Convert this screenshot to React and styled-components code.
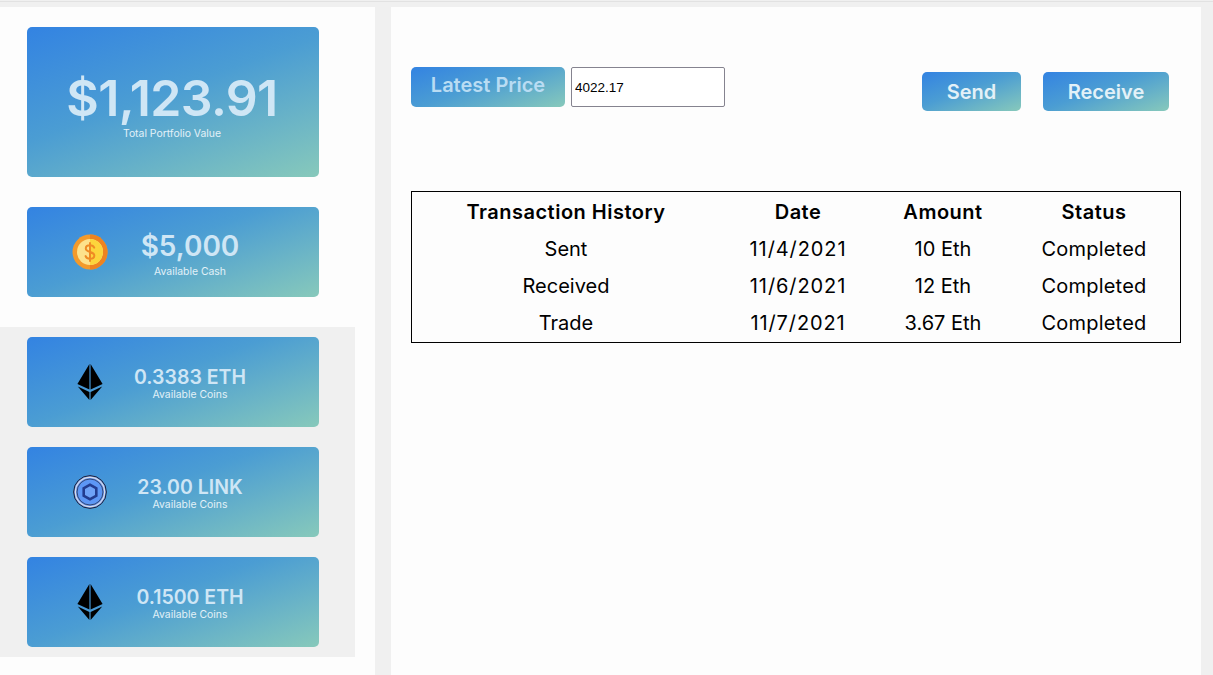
import React from "react";
import styled, { createGlobalStyle } from "styled-components";

const Global = createGlobalStyle`
  html, body { margin: 0; padding: 0; height: 100%; overflow: hidden; }
  body { background: #f0f0f0; font-family: "Inter", "Liberation Sans", sans-serif; }
  * { box-sizing: border-box; }
`;

const gradient = "linear-gradient(160deg, #3383e2 0%, #4b9dd3 45%, #87c9bb 100%)";

const Page = styled.div`
  height: 675px;
  display: grid;
  grid-template-columns: 375px 810px;
  column-gap: 16px;
  padding-top: 7px;
  background: linear-gradient(#f0f0f0 1px, #e2e2e2 1px, #e2e2e2 2px, #f0f0f0 2px);
`;
const Sidebar = styled.aside`
  background: #fdfdfd;
`;
const SideTop = styled.div`
  padding: 20px 0 30px 27px;
  display: flex;
  flex-direction: column;
  gap: 30px;
`;
const CoinSection = styled.section`
  width: 355px;
  height: 330px;
  background: #f0f0f0;
  padding: 10px 0 0 27px;
  display: flex;
  flex-direction: column;
  gap: 20px;
`;
const TotalCard = styled.div`
  width: 292px;
  height: 150px;
  border-radius: 5px;
  background: ${gradient};
  display: flex;
  flex-direction: column;
  align-items: center;
  justify-content: center;
  padding: 9px 2px 0 0;
`;
const TotalValue = styled.div`
  font-size: 50px;
  line-height: 50px;
  font-weight: 600;
  letter-spacing: -0.6px;
  color: #cfe6f5;
`;
const Caption = styled.div`
  margin-top: ${(p) => p.$gap || 0}px;
  font-size: 10.4px;
  line-height: 12px;
  font-weight: 400;
  color: #e2f1f8;
  white-space: nowrap;
`;
const AssetCard = styled.div`
  width: 292px;
  height: 90px;
  border-radius: 5px;
  background: ${gradient};
  display: grid;
  grid-template-columns: 45px 36px 164px;
  align-items: center;
`;
const IconSlot = styled.div`
  grid-column: 2;
  display: flex;
  justify-content: center;
  align-items: center;
  height: 36px;
`;
const AssetText = styled.div`
  grid-column: 3;
  display: flex;
  flex-direction: column;
  align-items: center;
  padding-top: ${(p) => p.$drop || 0}px;
`;
const AssetValue = styled.div`
  font-size: ${(p) => p.$size}px;
  line-height: ${(p) => p.$line}px;
  font-weight: 600;
  color: #cfe6f5;
  white-space: nowrap;
`;

const Main = styled.main`
  background: #fdfdfd;
  padding: 60px 32px 0 20px;
`;
const Toolbar = styled.div`
  display: flex;
  justify-content: space-between;
  align-items: flex-start;
  height: 124px;
`;
const PriceGroup = styled.div`
  display: flex;
  gap: 6px;
`;
const ActionGroup = styled.div`
  display: flex;
  gap: 22px;
  padding-top: 5px;
`;
const GradientButton = styled.button`
  width: ${(p) => p.$w}px;
  height: ${(p) => p.$h}px;
  padding: 0 0 ${(p) => p.$lift || 0}px;
  border: 0;
  border-radius: 5px;
  background: ${gradient};
  color: ${(p) => p.$color};
  font: 600 20px/1 "Inter", sans-serif;
`;
const PriceInput = styled.input`
  width: 154px;
  height: 40px;
  padding: 0 3px;
  border: 1px solid #85838f;
  border-radius: 2px;
  background: #fff;
  color: #000;
  font: 400 13.5px "Liberation Sans", sans-serif;
`;
const HistoryTable = styled.table`
  width: 770px;
  table-layout: fixed;
  border: 1px solid #000;
  border-spacing: 2px;
  color: #000;
  font-size: 20px;
`;
const HeadCell = styled.th`
  height: 35px;
  padding: 0;
  font-weight: 600;
  letter-spacing: 0.5px;
  text-align: center;
`;
const Cell = styled.td`
  height: 35px;
  padding: 0;
  font-weight: 400;
  letter-spacing: ${(p) => p.$spacing || 0}px;
  text-align: center;
`;

const Coin = () => (
  <svg width="36" height="36" viewBox="0 0 36 36">
    <circle cx="18" cy="18" r="17.5" fill="#f39a2b" />
    <path d="M18 .5a17.5 17.5 0 0 1 0 35z" fill="#ee8320" />
    <circle cx="18" cy="18" r="13" fill="#fde28c" />
    <path d="M18 5a13 13 0 0 1 0 26z" fill="#fcd43c" />
    <path d="M22.2 13.6c-.6-1.5-2.2-2.3-4.2-2.3-2.400 0-4.200 1.200-4.200 3.200 0 4.400 8.500 2.500 8.500 6.900 0 2-1.900 3.300-4.300 3.300-2.200 0-3.800-.9-4.400-2.600M18 9v18" fill="none" stroke="#ef8b24" strokeWidth="2" strokeLinecap="round" />
  </svg>
);
const Eth = () => (
  <svg width="26" height="36" viewBox="0 0 26 36">
    <path d="M12.400 0 .4 20l12 5.400zM13.600 0l12 20-12 5.400z" fill="#000" />
    <path d="M.8 22.600l11.600 5.400V36zM25.200 22.600l-11.600 5.400V36z" fill="#000" />
  </svg>
);
const LinkCoin = () => (
  <svg width="34" height="34" viewBox="0 0 34 34">
    <circle cx="17" cy="17" r="16.400" fill="#6f93e8" stroke="#1a2238" strokeWidth="1" />
    <circle cx="17" cy="17" r="14.600" fill="#6a96f2" stroke="#d9dde6" strokeWidth="1.200" />
    <circle cx="17" cy="17" r="13" fill="#5d97f5" stroke="#27324f" strokeWidth=".8" />
    <path d="M17 8.200 24.600 12.600v8.800L17 25.800 9.400 21.400v-8.800z" fill="#223c8f" />
    <path d="M17 11.200 22 14v6l-5 2.800-5-2.800v-6z" fill="#6ea2f7" />
  </svg>
);

const rows = [
  ["Sent", "11/4/2021", "10 Eth", "Completed"],
  ["Received", "11/6/2021", "12 Eth", "Completed"],
  ["Trade", "11/7/2021", "3.67 Eth", "Completed"],
];

const spacings = [0, 0.9, 0, 0.2];

const assets = [
  { icon: <Eth />, value: "0.3383 ETH" },
  { icon: <LinkCoin />, value: "23.00 LINK" },
  { icon: <Eth />, value: "0.1500 ETH" },
];

export default function App() {
  return (
    <>
      <Global />
      <Page>
        <Sidebar>
          <SideTop>
            <TotalCard>
              <TotalValue>$1,123.91</TotalValue>
              <Caption $gap={5}>Total Portfolio Value</Caption>
            </TotalCard>
            <AssetCard>
              <IconSlot><Coin /></IconSlot>
              <AssetText $drop={4}>
                <AssetValue $size={28} $line={33}>$5,000</AssetValue>
                <Caption $gap={3}>Available Cash</Caption>
              </AssetText>
            </AssetCard>
          </SideTop>
          <CoinSection>
            {assets.map((a) => (
              <AssetCard key={a.value}>
                <IconSlot>{a.icon}</IconSlot>
                <AssetText $drop={2}>
                  <AssetValue $size={19.5} $line={24}>{a.value}</AssetValue>
                  <Caption>Available Coins</Caption>
                </AssetText>
              </AssetCard>
            ))}
          </CoinSection>
        </Sidebar>
        <Main>
          <Toolbar>
            <PriceGroup>
              <GradientButton $w={154} $h={40} $lift={4} $color="#b9dcf3">Latest Price</GradientButton>
              <PriceInput readOnly value="4022.17" />
            </PriceGroup>
            <ActionGroup>
              <GradientButton $w={99} $h={39} $color="#e3f1f8">Send</GradientButton>
              <GradientButton $w={126} $h={39} $color="#e3f1f8">Receive</GradientButton>
            </ActionGroup>
          </Toolbar>
          <HistoryTable>
            <colgroup>
              <col style={{ width: 304 }} />
              <col style={{ width: 156 }} />
              <col style={{ width: 130 }} />
              <col style={{ width: 168 }} />
            </colgroup>
            <thead>
              <tr>
                <HeadCell>Transaction History</HeadCell>
                <HeadCell>Date</HeadCell>
                <HeadCell>Amount</HeadCell>
                <HeadCell>Status</HeadCell>
              </tr>
            </thead>
            <tbody>
              {rows.map((r) => (
                <tr key={r[0]}>
                  {r.map((c, i) => <Cell key={i} $spacing={spacings[i]}>{c}</Cell>)}
                </tr>
              ))}
            </tbody>
          </HistoryTable>
        </Main>
      </Page>
    </>
  );
}
